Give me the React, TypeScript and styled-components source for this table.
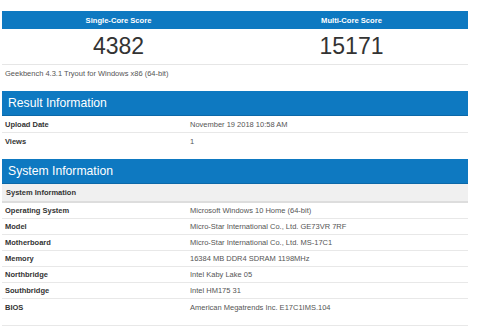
import React from "react";
import styled, { createGlobalStyle } from "styled-components";

const GlobalStyle = createGlobalStyle`
  body {
    margin: 0;
    background: #ffffff;
    font-family: "Liberation Sans", Arial, sans-serif;
    color: #333333;
  }
`;

const Page = styled.div`
  width: 466px;
  margin: 0 2px;
  padding-top: 11px;
`;

const ScoreTable = styled.div`
  display: grid;
  grid-template-columns: 1fr 1fr;
  border-bottom: 1px solid #e6e6e6;
`;

const ScoreHead = styled.div`
  height: 18px;
  background: #0e79c1;
  color: #ffffff;
  font-weight: bold;
  font-size: 7.6px;
  display: flex;
  align-items: center;
  justify-content: center;
`;

const ScoreValue = styled.div`
  height: 35px;
  display: flex;
  align-items: center;
  justify-content: center;
  font-size: 23px;
  color: #333333;
`;

const Version = styled.p`
  margin: 0;
  padding: 3px 3px 0;
  height: 12px;
  font-size: 7.5px;
  line-height: 12px;
  color: #555555;
`;

const Section = styled.section<{ $gap: number }>`
  margin-top: ${(p) => p.$gap}px;
`;

const SectionHead = styled.h2`
  margin: 0;
  height: 25px;
  padding: 0 6px;
  background: #0e79c1;
  border-bottom: 1px solid #0b68a8;
  box-sizing: border-box;
  color: #ffffff;
  font-weight: normal;
  font-size: 12.2px;
  display: flex;
  align-items: center;
`;

const SubHead = styled.div`
  height: 19px;
  box-sizing: border-box;
  padding: 0 4px;
  background: #f0f0f0;
  border-bottom: 2px solid #dddddd;
  font-weight: bold;
  font-size: 7.5px;
  display: flex;
  align-items: center;
`;

const Row = styled.div<{ $h: number; $line: boolean }>`
  display: grid;
  grid-template-columns: 188px 1fr;
  align-items: center;
  height: ${(p) => p.$h}px;
  box-sizing: border-box;
  border-bottom: ${(p) => (p.$line ? "1px solid #e8e8e8" : "none")};
  font-size: 7.5px;
`;

const Label = styled.span`
  padding-left: 3px;
  font-weight: bold;
  color: #333333;
`;

const Value = styled.span`
  color: #555555;
`;

const TableEnd = styled.div`
  height: 10px;
  border-bottom: 1px solid #e8e8e8;
`;

const resultRows = [
  ["Upload Date", "November 19 2018 10:58 AM"],
  ["Views", "1"],
];

const systemRows = [
  ["Operating System", "Microsoft Windows 10 Home (64-bit)"],
  ["Model", "Micro-Star International Co., Ltd. GE73VR 7RF"],
  ["Motherboard", "Micro-Star International Co., Ltd. MS-17C1"],
  ["Memory", "16384 MB DDR4 SDRAM 1198MHz"],
  ["Northbridge", "Intel Kaby Lake 05"],
  ["Southbridge", "Intel HM175 31"],
  ["BIOS", "American Megatrends Inc. E17C1IMS.104"],
];

export default function App() {
  return (
    <>
      <GlobalStyle />
      <Page>
        <ScoreTable>
          <ScoreHead>Single-Core Score</ScoreHead>
          <ScoreHead>Multi-Core Score</ScoreHead>
          <ScoreValue>4382</ScoreValue>
          <ScoreValue>15171</ScoreValue>
        </ScoreTable>
        <Version>Geekbench 4.3.1 Tryout for Windows x86 (64-bit)</Version>

        <Section $gap={11}>
          <SectionHead>Result Information</SectionHead>
          {resultRows.map(([k, v], i) => (
            <Row key={k} $h={i === 0 ? 17 : 16} $line={i === 0}>
              <Label>{k}</Label>
              <Value>{v}</Value>
            </Row>
          ))}
        </Section>

        <Section $gap={10}>
          <SectionHead>System Information</SectionHead>
          <SubHead>System Information</SubHead>
          {systemRows.map(([k, v], i) => (
            <Row key={k} $h={16} $line={i < systemRows.length - 1}>
              <Label>{k}</Label>
              <Value>{v}</Value>
            </Row>
          ))}
          <TableEnd />
        </Section>
      </Page>
    </>
  );
}
